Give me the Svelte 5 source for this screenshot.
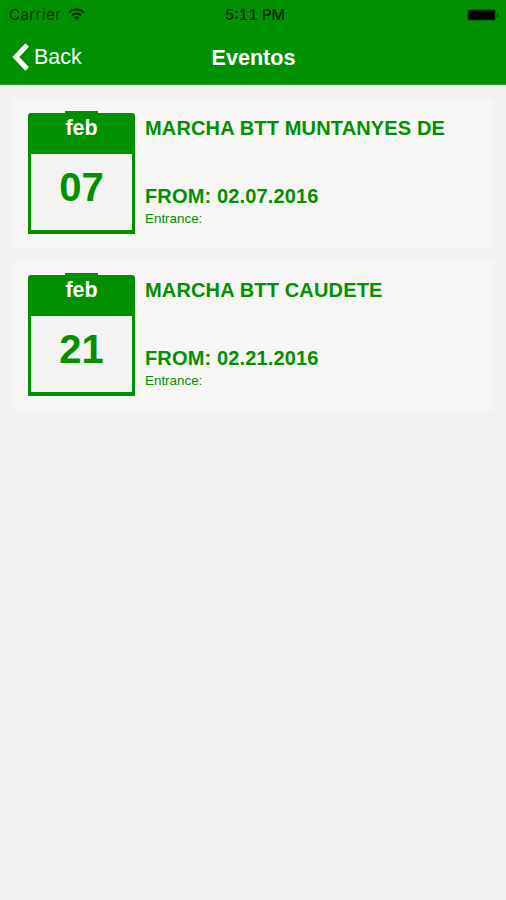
<script lang="ts">
  const events = [
    { month: "feb", day: "07", title: "MARCHA BTT MUNTANYES DE", from: "02.07.2016" },
    { month: "feb", day: "21", title: "MARCHA BTT CAUDETE", from: "02.21.2016" },
  ];
</script>

<div class="screen">
  <header>
    <div class="status">
      <div class="carrier">
        <span class="carrier-name">Carrier</span>
        <svg width="17" height="13" viewBox="0 0 17 13" fill="none" stroke="currentColor" stroke-width="1.9">
          <path d="M1.1 4.6a10.5 10.5 0 0 1 14.8 0" />
          <path d="M3.8 7.5a6.7 6.7 0 0 1 9.4 0" />
          <path d="M8.5 12.6 5.6 9.6a4.2 4.2 0 0 1 5.8 0z" fill="currentColor" stroke="none" />
        </svg>
      </div>
      <span class="time">5:11 PM</span>
      <div class="battery">
        <svg width="33" height="12" viewBox="0 0 33 12">
          <rect x="0.5" y="0.5" width="28" height="11" rx="1.5" fill="#004a00" />
          <rect x="1.5" y="1.5" width="26" height="9" rx="0.5" fill="#000" />
          <path d="M29.8 4a2 2 0 0 1 0 4z" fill="#002800" />
        </svg>
      </div>
    </div>
    <nav>
      <button class="back" type="button">
        <svg width="17" height="28" viewBox="0 0 17 28" fill="none" stroke="#fff" stroke-width="5">
          <path d="M15.2 2 3.8 14l11.4 12" />
        </svg>
        <span>Back</span>
      </button>
      <h1>Eventos</h1>
    </nav>
  </header>

  <main>
    {#each events as event}
      <article>
        <div class="calendar">
          <div class="tab"></div>
          <div class="month">{event.month}</div>
          <div class="day">{event.day}</div>
        </div>
        <div class="details">
          <h2>{event.title}</h2>
          <p class="from">FROM: {event.from}</p>
          <p class="entrance">Entrance:</p>
        </div>
      </article>
    {/each}
  </main>
</div>

<style>
  :global(body) {
    margin: 0;
    background: #f3f2f0;
  }

  .screen {
    min-height: 900px;
    background: #f3f2f0;
    color: #009000;
    font-family: "Liberation Sans", Arial, sans-serif;
  }

  header {
    box-sizing: border-box;
    height: 85px;
    background: #009100;
    border-bottom: 1px solid #2fa22d;
  }

  .status {
    display: grid;
    grid-template-columns: 1fr auto 1fr;
    align-items: center;
    height: 29px;
    padding: 0 6px 0 9px;
    color: #002f00;
    font-family: Inter, sans-serif;
    font-size: 15px;
    line-height: 29px;
  }

  .carrier {
    display: flex;
    align-items: center;
    gap: 7px;
  }

  .carrier-name {
    letter-spacing: 0.45px;
  }

  .time {
    margin-left: 1px;
    color: #002000;
    font-weight: 500;
    font-variant-numeric: tabular-nums;
    letter-spacing: 0;
  }

  .battery {
    display: flex;
    justify-content: flex-end;
  }

  nav {
    display: grid;
    grid-template-columns: 1fr auto 1fr;
    align-items: center;
    height: 55px;
    padding: 0 11px 0 12px;
    color: #fff;
  }

  .back {
    display: flex;
    align-items: center;
    gap: 5px;
    padding: 0;
    border: 0;
    background: none;
    color: inherit;
    font: 21.5px "Liberation Sans", Arial, sans-serif;
  }

  .back span {
    padding-top: 2px;
  }

  h1 {
    margin: 3px 0 0;
    font-size: 21.6px;
    line-height: 26px;
  }

  main {
    display: flex;
    flex-direction: column;
    gap: 13px;
    padding: 14px 13px;
  }

  article {
    display: flex;
    box-sizing: border-box;
    gap: 10px;
    height: 149px;
    padding: 12px 14px 0 15px;
    background: #f7f6f4;
    box-shadow: 0 0 2px #f6f5f3;
  }

  .calendar {
    width: 107px;
    text-align: center;
    font-weight: bold;
  }

  .tab {
    width: 33px;
    height: 2px;
    margin: 0 auto;
    background: #009000;
  }

  .month {
    height: 41px;
    border-radius: 3px 3px 0 0;
    background: #009000;
    color: #fff;
    font-size: 21.4px;
    line-height: 31px;
  }

  .day {
    box-sizing: border-box;
    height: 80px;
    border: 3px solid #009000;
    border-top: 0;
    border-bottom-width: 4px;
    background: #f4f3f1;
    font-size: 40px;
    line-height: 67px;
  }

  h2,
  p {
    margin: 0;
  }

  h2,
  .from {
    font-size: 20px;
    font-weight: bold;
    letter-spacing: 0.15px;
    line-height: 24px;
  }

  h2 {
    height: 73px;
    padding-top: 5px;
    box-sizing: border-box;
  }

  .entrance {
    padding-top: 1px;
    font-size: 13.4px;
    line-height: 20px;
  }
</style>
